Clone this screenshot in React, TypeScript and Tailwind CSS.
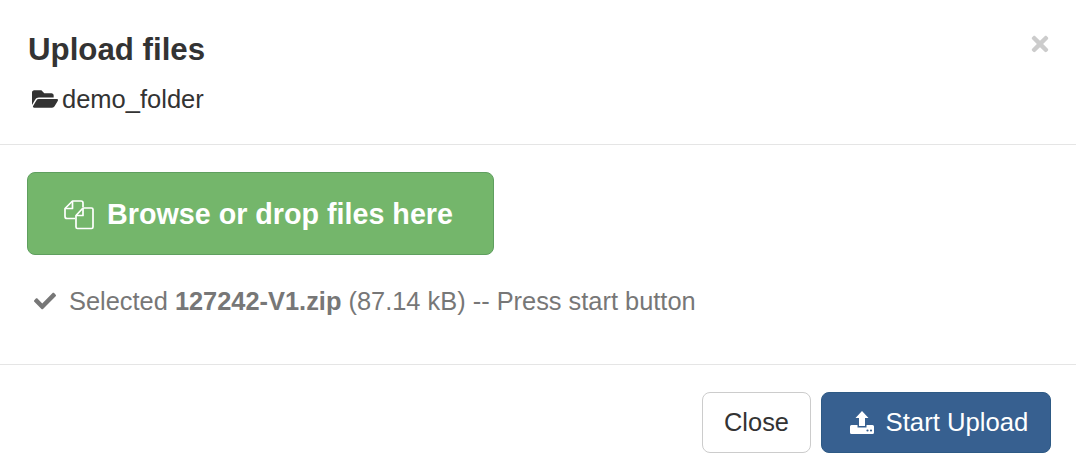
import React from 'react';
import { FaCheck, FaFolderOpen, FaTimes } from 'react-icons/fa';

// Two overlapping sheets with folded corners
function FilesIcon() {
  return (
    <svg width="30" height="30" viewBox="0 0 30 30" fill="none" stroke="white" strokeWidth="1.7" strokeLinejoin="round">
      <path d="M11 18.5H3a2 2 0 0 1-2-2V8.5L8.5 1H17a2 2 0 0 1 2 2V7" />
      <path d="M8.5 1V8.5H1" />
      <path d="M12 15.5L19 8H27.5a1.5 1.5 0 0 1 1.5 1.5V27a1.5 1.5 0 0 1-1.5 1.5H13.5A1.5 1.5 0 0 1 12 27z" />
      <path d="M19 8V15.5H12" />
    </svg>
  );
}

// Tray with an arrow pointing up
function UploadIcon() {
  return (
    <svg width="24" height="23" viewBox="0 0 24 23" fill="white">
      <path d="M12 0L18.5 7H15V15H9V7H5.5z" />
      <path d="M0 15.5a1.5 1.5 0 0 1 1.5-1.5H7.5V16.5H16.5V14H22.5a1.5 1.5 0 0 1 1.5 1.5V21.5a1.5 1.5 0 0 1-1.5 1.5H1.5A1.5 1.5 0 0 1 0 21.5z" />
      <circle cx="17.5" cy="19.5" r="1.1" fill="#376090" />
      <circle cx="21" cy="19.5" r="1.1" fill="#376090" />
    </svg>
  );
}

export default function App() {
  return (
    <div className="flex h-[474px] w-[1076px] flex-col overflow-hidden bg-white font-['Liberation_Sans',Arial,sans-serif] text-[#333]">
      {/* Header */}
      <div className="relative h-[145px] border-b border-[#e5e5e5] px-[28px] pt-[30px]">
        <h4 className="text-[31.25px] leading-[40px] font-bold text-[#333]">Upload files</h4>
        <div className="mt-[14px] flex items-center gap-[4px] text-[25.5px] leading-[30px]">
          <FaFolderOpen className="ml-[4px] text-[26px]" />
          <span>demo_folder</span>
        </div>
        <button className="absolute top-[32px] right-[24px] text-[#ccc]">
          <FaTimes className="text-[24px]" />
        </button>
      </div>

      {/* Body */}
      <div className="h-[220px] border-b border-[#e5e5e5] px-[27px] pt-[27px]">
        <button className="flex h-[83px] w-[467px] items-center justify-center gap-[13px] rounded-[8px] border border-[#5f9f5f] bg-[#74b66b] pt-[2px] pr-[4px] text-[28.7px] font-bold text-white">
          <FilesIcon />
          <span>Browse or drop files here</span>
        </button>
        <div className="mt-[31px] flex items-center text-[25.4px] leading-[30px] text-[#777]">
          <FaCheck className="mr-[13px] ml-[7px] text-[22px]" />
          <span>
            Selected <b>127242-V1.zip</b> (87.14 kB) -- Press start button
          </span>
        </div>
      </div>

      {/* Footer */}
      <div className="flex justify-end gap-[10px] pt-[27px] pr-[25px]">
        <button className="h-[61px] w-[109px] rounded-[8px] border border-[#ccc] bg-white text-[25.4px] text-[#333]">Close</button>
        <button className="flex h-[61px] w-[230px] items-center justify-center gap-[12px] rounded-[8px] border border-[#2e5a85] bg-[#376090] pl-[6px] text-[25.7px] text-white">
          <UploadIcon />
          <span>Start Upload</span>
        </button>
      </div>
    </div>
  );
}
